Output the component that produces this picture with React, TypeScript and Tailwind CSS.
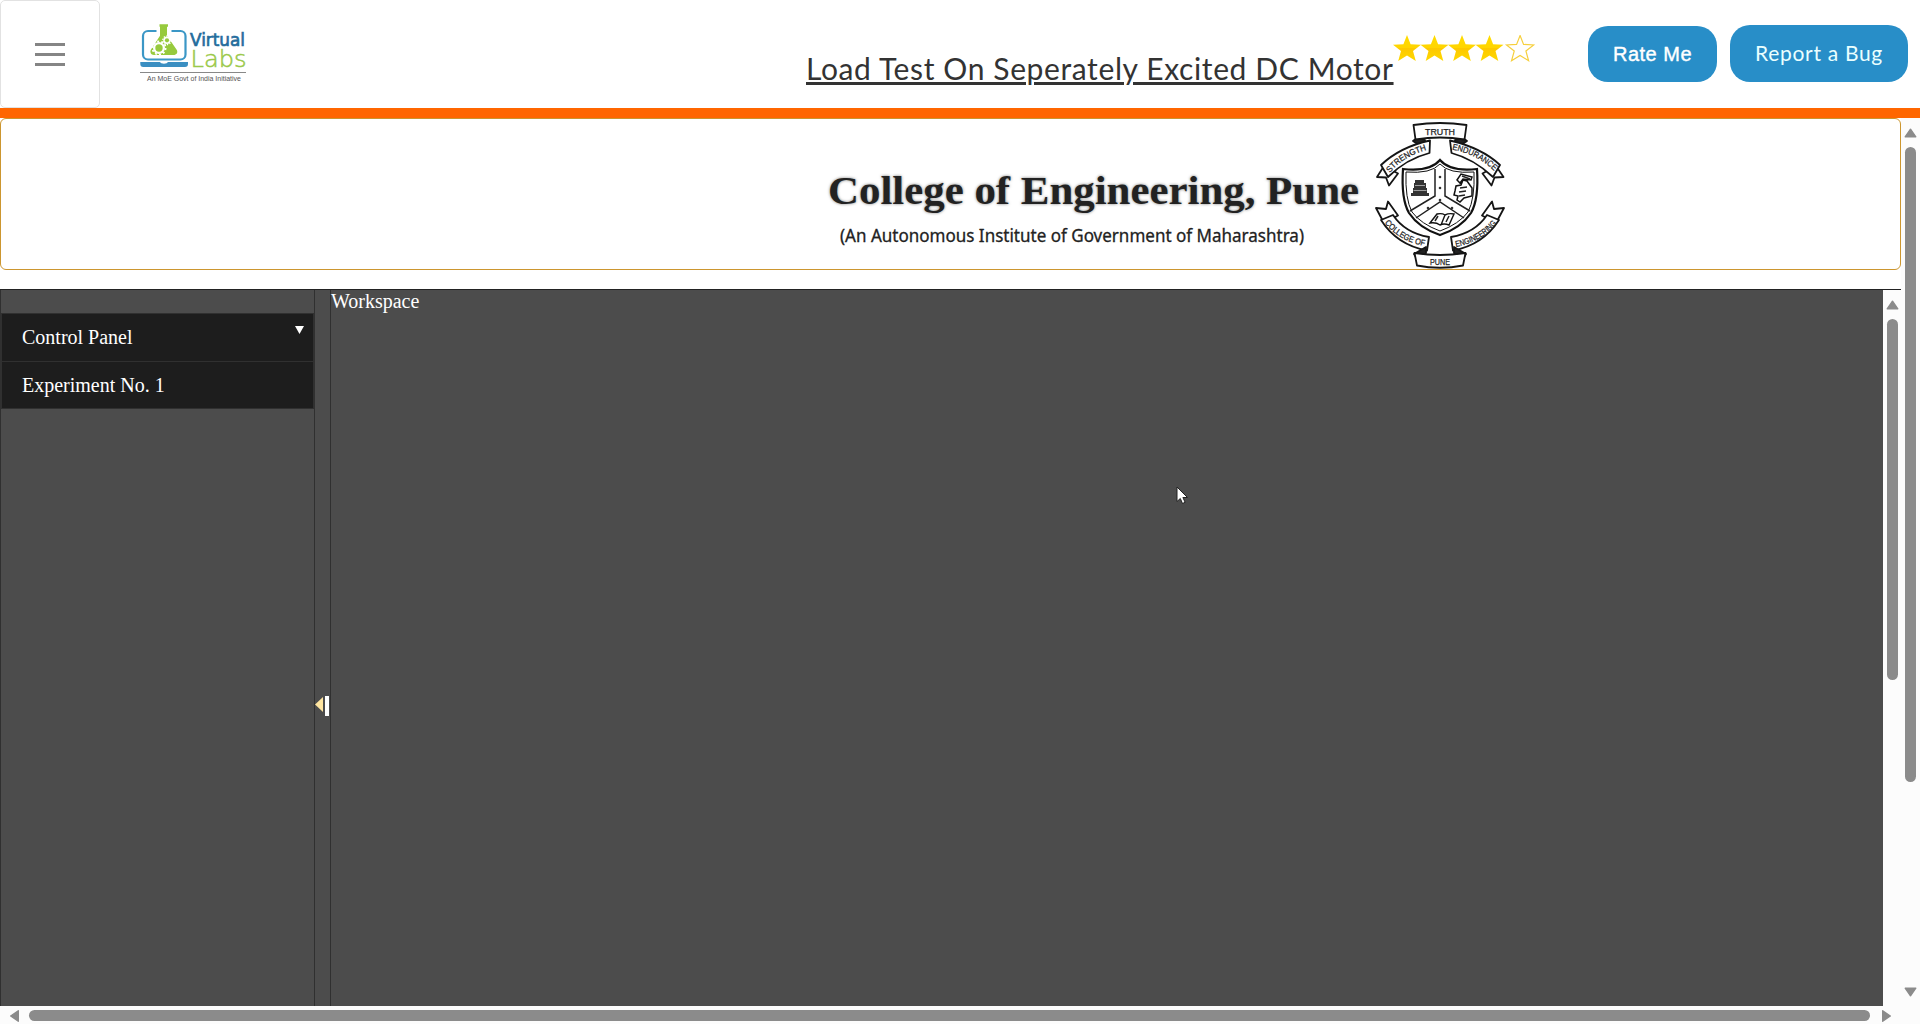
import React from "react";

const STAR = "M14 0L17.6 9.2L28 9.7L20 16L22.8 26L14 20.5L5.2 26L8 16L0 9.7L10.4 9.2Z";

function Logo() {
  return (
    <svg width="107" height="60" viewBox="140 24 107 60" className="mt-6 ml-10 shrink-0">
      <rect x="143" y="31" width="42.5" height="28.5" rx="5" fill="#fff" stroke="#3b97c6" strokeWidth="2.2" />
      <path d="M156.500 24h15v12h-15z" fill="#fff" />
      <path d="M159.500 24.300h8.500v2.500h-1v9l9.500 13.700c2 3 0 5.500-3 5.500h-19.500c-3 0-4.500-3-3-5.500l9-13.700v-9h-.5z" fill="#97ca3d" />
      <circle cx="159" cy="48" r="6" fill="#fff" />
      <circle cx="159" cy="48" r="6.600" fill="none" stroke="#fff" strokeWidth="1.800" strokeDasharray="2 2.150" />
      <circle cx="159" cy="48" r="3.700" fill="#97ca3d" />
      <circle cx="167" cy="40.300" r="3.700" fill="#fff" />
      <circle cx="167" cy="40.300" r="4.200" fill="none" stroke="#fff" strokeWidth="1.300" strokeDasharray="1.300 1.340" />
      <circle cx="167" cy="40.300" r="2.100" fill="#97ca3d" />
      <path d="M140.300 62h19.500q1 1.800 4.200 1.800t4-1.800h20v2q0 3-3 3h-41.700q-3 0-3-3z" fill="#3b8fc2" />
      <text x="190" y="45.700" fill="#246c9c" stroke="#246c9c" strokeWidth=".7" fontSize="18.500" textLength="55" lengthAdjust="spacingAndGlyphs" className="font-['DejaVu_Sans']">Virtual</text>
      <text x="190.500" y="66.700" fill="#9bc94a" stroke="#9bc94a" strokeWidth=".5" fontSize="23" textLength="56" lengthAdjust="spacingAndGlyphs" className="font-['DejaVu_Sans'] font-extralight">Labs</text>
      <path d="M140 72.500h106" stroke="#888" />
      <text x="147" y="81" fill="#555" fontSize="7.300" textLength="94" lengthAdjust="spacingAndGlyphs" className="font-['Liberation_Sans']">An MoE Govt of India Initiative</text>
    </svg>
  );
}

function Stars() {
  return (
    <svg width="143" height="28" viewBox="0 0 143 28" className="mt-[35px] shrink-0">
      <defs>
        <linearGradient id="gold" x1="0" x2="0" y1="0" y2="1">
          <stop offset="0" stopColor="#ffdc00" />
          <stop offset=".5" stopColor="#ffd500" />
          <stop offset=".52" stopColor="#fdc800" />
          <stop offset="1" stopColor="#ffd900" />
        </linearGradient>
      </defs>
      {[0, 27.5, 55, 82.5].map((x) => (
        <path key={x} d={STAR} transform={`translate(${x} 0)`} fill="url(#gold)" />
      ))}
      <path d={STAR} transform="translate(113.500 .5) scale(.97)" fill="#fff" stroke="#f6cf3c" strokeWidth="1.200" />
    </svg>
  );
}

function Crest() {
  return (
    <svg width="130" height="147" viewBox="1375 121 130 147" className="shrink-0">
      <defs>
        <path id="strength" d="M1390 172Q1402 156 1428 148.500" />
        <path id="endurance" d="M1452 148.500Q1480 154 1497 173" />
        <path id="college" d="M1384.500 222Q1400 241 1427 245.500" />
        <path id="engineering" d="M1456 246Q1482 241 1498 221" />
      </defs>
      <g fill="#fff" stroke="#151515" strokeWidth="1.800" strokeLinejoin="round">
        <path d="M1417 137l-4 3 12 8v-9zM1463 137l4 3-12 8v-9z" fill="#222" />
        <path d="M1384 165l-7 11 9 .5 3 8 9-12zM1496 165l7.500 11-9 .5-3 8-9-12z" />
        <path d="M1381 164Q1400 146 1430 139.500L1429.500 152Q1406 158 1388 176Z" />
        <path d="M1450 139.500Q1482 147 1500 164L1493 176Q1474 158 1451.500 152Z" />
        <path d="M1413.500 124Q1440 120 1466.500 124L1464.500 138.500Q1440 134.500 1415.500 138.500Z" />
        <path d="M1384 222l-8-15 10 1 2-7.500 10 14zM1496 222l8-15-10 1-2-7.500-10 14z" />
        <path d="M1381 219L1393 214Q1405 232 1429 236L1427 249.500Q1397 244 1381 219Z" />
        <path d="M1499 219L1487 214Q1475 232 1451 236L1453 249.500Q1483 244 1499 219Z" />
        <path d="M1417 258l-3-5 12-7v6zM1463 258l3-5-12-7v6z" fill="#222" />
        <path d="M1414.500 252Q1440 256 1465.500 252L1463 264.500Q1440 269 1417 264.500Z" />
      </g>
      <path d="M1440 159Q1450 171 1477 168Q1479 198 1471 212Q1461 227 1440 234Q1419 227 1409 212Q1401 198 1403 168Q1430 171 1440 159Z" fill="#fff" stroke="#111" strokeWidth="2.200" />
      <path d="M1440 163Q1449 173 1474 171Q1475 198 1468 211Q1459 223 1440 230Q1421 223 1412 211Q1405 198 1406 171Q1431 173 1440 163Z" fill="none" stroke="#111" strokeWidth="1" />
      <path d="M1435 168V195L1410 210M1445 168V195L1470 210M1416 217L1440 201L1464 217" fill="none" stroke="#222" strokeWidth="1.500" />
      {[[1440, 176], [1440, 187], [1440, 199], [1428, 207], [1452, 207]].map(([x, y]) => (
        <circle key={`${x}-${y}`} cx={x} cy={y} r="1.300" fill="#333" />
      ))}
      <path d="M1415 179h9v3h2v5h1v5h2v3h-18v-3h2v-5h1v-5h1z" fill="#333" />
      <path d="M1415 184.500h10M1413.500 189.500h13" stroke="#bbb" strokeWidth=".8" />
      <path d="M1457 179l4-6 11 3-1 3-8-1-3 4zM1463 179l4 1 5 7 0 8-8 2-4 4-3-2 1-4-4-1 1-4 1-5 5-1z" fill="#fff" stroke="#111" strokeWidth="1.500" />
      <path d="M1460 187l7-1M1459 191l7-1M1459 195l6-1M1470 178l-8-3" stroke="#222" strokeWidth="1.500" />
      <path d="M1430 222l7-9q5-1 8 1 4-2 9-1l-5 11q-5-2-9 0-4-3-10-2zM1445 214l-4 10" fill="#fff" stroke="#111" strokeWidth="1.400" />
      <path d="M1438 215l-3 5M1449 215l-3 6" stroke="#222" strokeWidth="1.500" />
      <g fill="#222" className="font-['Liberation_Sans']" fontSize="8.500" stroke="#222" strokeWidth=".25">
        <text x="1425" y="134" textLength="30" lengthAdjust="spacingAndGlyphs">TRUTH</text>
        <text textLength="44" lengthAdjust="spacingAndGlyphs"><textPath href="#strength">STRENGTH</textPath></text>
        <text textLength="48" lengthAdjust="spacingAndGlyphs"><textPath href="#endurance">ENDURANCE</textPath></text>
        <text textLength="47" lengthAdjust="spacingAndGlyphs"><textPath href="#college">COLLEGE OF</textPath></text>
        <text textLength="48" lengthAdjust="spacingAndGlyphs"><textPath href="#engineering">ENGINEERING</textPath></text>
        <text x="1430" y="263.500" textLength="20" lengthAdjust="spacingAndGlyphs">PUNE</text>
      </g>
    </svg>
  );
}

function Arrow({ dir }: { dir: "up" | "down" | "left" | "right" }) {
  const turn = { up: "rotate-0", down: "rotate-180", left: "-rotate-90", right: "rotate-90" }[dir];
  return (
    <svg width="13" height="10" viewBox="0 0 13 10" className={`shrink-0 ${turn}`}>
      <path d="M6.500 1.200L11.800 8.800H1.200Z" fill="#8b8b8b" stroke="#8b8b8b" strokeWidth="1.400" strokeLinejoin="round" />
    </svg>
  );
}

export default function App() {
  return (
    <div className="flex h-[1024px] w-[1920px] flex-col overflow-hidden bg-white">
      <header className="flex h-[108px] shrink-0 items-start">
        <div className="flex h-[108px] w-[100px] shrink-0 flex-col items-center justify-center gap-[7px] rounded-[5px] border border-[#e2e2e2]">
          <div className="h-[3px] w-[30px] bg-[#858585]" />
          <div className="h-[3px] w-[30px] bg-[#858585]" />
          <div className="h-[3px] w-[30px] bg-[#858585]" />
        </div>
        <Logo />
        <h1 className="mt-[47px] ml-[559px] w-[587px] shrink-0 font-['Lato',sans-serif] text-[30px] leading-[42px] tracking-[0.62px] whitespace-nowrap text-[#333] underline decoration-[3px] underline-offset-[2px]">
          Load Test On Seperately Excited DC Motor
        </h1>
        <Stars />
        <button className="mt-[26px] ml-[52px] h-14 w-[129px] shrink-0 rounded-[20px] bg-[#288ec8] font-['Liberation_Sans',sans-serif] text-[20px] font-medium tracking-[0.5px] whitespace-nowrap text-white [-webkit-text-stroke:0.4px_white]">
          Rate Me
        </button>
        <button className="mt-[25px] ml-[13px] h-[57px] w-[178px] shrink-0 rounded-[20px] bg-[#288ec8] pb-[2px] font-['Lato',sans-serif] text-[21px] tracking-[0.7px] whitespace-nowrap text-[#eaffff]">
          Report a Bug
        </button>
      </header>
      <div className="h-[10px] shrink-0 bg-[#ff6600]" />
      <div className="flex h-[888px] shrink-0">
        <div className="flex w-[1901px] flex-col">
          <section className="flex h-[152px] shrink-0 items-start rounded-[6px] border border-[#cc962f] pt-[3px] pl-[824px]">
            <svg width="550" height="120" viewBox="825 140 550 120" className="mt-[18px] shrink-0">
              <text x="828" y="204" fontSize="41" fill="#222" textLength="531" lengthAdjust="spacingAndGlyphs" className="font-['Liberation_Serif'] font-bold [text-shadow:0_0_3px_#777]">College of Engineering, Pune</text>
              <text x="840" y="241.500" fontSize="17.500" fill="#222" stroke="#222" strokeWidth=".3" textLength="464" lengthAdjust="spacingAndGlyphs" className="font-['Noto_Sans']">(An Autonomous Institute of Government of Maharashtra)</text>
            </svg>
            <Crest />
          </section>
          <main className="mt-[19px] flex h-[717px] shrink-0 border-t border-[#222]">
            <aside className="w-[315px] shrink-0 border-x border-[#303030] bg-[#4c4c4c] pt-[23px]">
              <nav className="h-24 border border-[#303030] bg-[#1d1d1d] font-['Liberation_Serif',serif] text-[20px] text-white">
                <div className="flex h-12 items-start justify-between border-b border-[#303030] pr-[9px] pl-5">
                  <span className="leading-[47px]">Control Panel</span>
                  <svg width="9" height="9" viewBox="0 0 9 9" className="mt-3"><path d="M0 0h9L4.500 8z" fill="#fff" /></svg>
                </div>
                <div className="pl-5 leading-[47px]">Experiment No. 1</div>
              </nav>
            </aside>
            <div className="flex w-4 shrink-0 items-center border-r border-[#303030] bg-[#4c4c4c] pt-[115px]">
              <svg width="15" height="22" viewBox="0 0 15 22">
                <path d="M0 9.500L8 2v15z" fill="#ffe5a0" />
                <path d="M10 1h4v20h-4z" fill="#fff" />
              </svg>
            </div>
            <div className="relative w-[1552px] shrink-0 bg-[#4c4c4c] font-['Liberation_Serif',serif] text-[20px] leading-[23px] text-white">
              Workspace
              <svg width="14" height="20" viewBox="0 0 14 20" className="absolute top-[196px] left-[845px]">
                <path d="M1 1v14.500l3.300-3 2.200 5 2.600-1.200-2.200-4.800h4.600z" fill="#fff" stroke="#222" />
              </svg>
            </div>
            <div className="flex w-[18px] shrink-0 flex-col items-center bg-[#fcfcfc] pt-[10px]">
              <Arrow dir="up" />
              <div className="mt-[9px] h-[361px] w-[11px] rounded-full bg-[#8b8b8b]" />
            </div>
          </main>
        </div>
        <div className="flex w-[19px] shrink-0 flex-col items-center bg-[#fcfcfc] pt-[10px] pb-[9px]">
          <Arrow dir="up" />
          <div className="mt-[9px] h-[635px] w-[11px] shrink-0 rounded-full bg-[#8b8b8b]" />
          <div className="mt-auto"><Arrow dir="down" /></div>
        </div>
      </div>
      <div className="flex h-[18px] shrink-0 items-center bg-[#fcfcfc] pt-px pl-2">
        <Arrow dir="left" />
        <div className="ml-2 h-[11px] w-[1841px] shrink-0 rounded-full bg-[#8b8b8b]" />
        <div className="ml-[10px]"><Arrow dir="right" /></div>
      </div>
    </div>
  );
}
